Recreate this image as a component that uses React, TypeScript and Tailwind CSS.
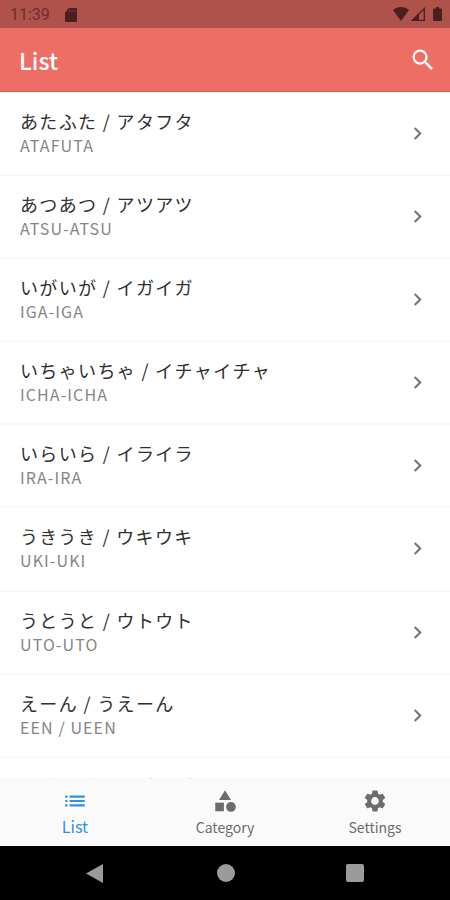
import { MdCategory, MdChevronRight, MdList, MdSearch, MdSettings } from "react-icons/md";
import type { IconType } from "react-icons";

type Word = {
  kana: string;
  romaji: string;
};

const words: Word[] = [
  { kana: "あたふた / アタフタ", romaji: "ATAFUTA" },
  { kana: "あつあつ / アツアツ", romaji: "ATSU-ATSU" },
  { kana: "いがいが / イガイガ", romaji: "IGA-IGA" },
  { kana: "いちゃいちゃ / イチャイチャ", romaji: "ICHA-ICHA" },
  { kana: "いらいら / イライラ", romaji: "IRA-IRA" },
  { kana: "うきうき / ウキウキ", romaji: "UKI-UKI" },
  { kana: "うとうと / ウトウト", romaji: "UTO-UTO" },
  { kana: "えーん / うえーん", romaji: "EEN / UEEN" },
  { kana: "おずおず / オズオズ", romaji: "OZU-OZU" },
];

const tabs: { label: string; icon: IconType; active?: boolean }[] = [
  { label: "List", icon: MdList, active: true },
  { label: "Category", icon: MdCategory },
  { label: "Settings", icon: MdSettings },
];

function StatusBar() {
  return (
    <div className="flex h-7 shrink-0 items-center justify-between bg-[#b0524c] pl-[10px] pr-2 text-[#4a1f1d]">
      <div className="flex items-center gap-[15px]">
        <span className="pt-[2px] font-[Roboto,sans-serif] text-[16px] leading-[26px] text-[#6b2f2c]">11:39</span>
        <svg className="mt-px h-[14px] w-3" viewBox="0 0 12 14" fill="currentColor">
          <path d="M4 0h7a1 1 0 0 1 1 1v12a1 1 0 0 1-1 1H1a1 1 0 0 1-1-1V4.500z" />
          <path d="M4.500 2v2M7 2v2M9.500 2v2" stroke="#8a403c" />
        </svg>
      </div>
      <div className="flex items-center">
        <svg className="h-[14px] w-4" viewBox="0 0 16 14" fill="currentColor">
          <path d="M0 3C4.500-1 11.500-1 16 3L8 14z" />
        </svg>
        <svg className="ml-[2px] h-[14px] w-[14px]" viewBox="0 0 14 14">
          <path d="M13.300 1.500v11.800H1.500z" fill="none" stroke="currentColor" strokeWidth="1.300" />
          <path d="M0 14L8 6v8z" fill="currentColor" />
        </svg>
        <svg className="ml-2 h-[14px] w-[9px]" viewBox="0 0 9 14" fill="currentColor">
          <path d="M3 0h3v1.500h2a1 1 0 0 1 1 1V13a1 1 0 0 1-1 1H1a1 1 0 0 1-1-1V2.500a1 1 0 0 1 1-1h2z" />
        </svg>
      </div>
    </div>
  );
}

function WordRow({ kana, romaji }: Word) {
  return (
    <li className="flex h-[83.15px] shrink-0 items-center justify-between border-b-2 border-[#f7f8f8] px-5">
      <div className="pb-[1px]">
        <p className="text-[18px] leading-6 tracking-[1.35px] text-[#303030]">{kana}</p>
        <p className="text-[16px] leading-6 tracking-[1.1px] text-[#858585]">{romaji}</p>
      </div>
      <MdChevronRight className="size-[25px] text-[#757575]" />
    </li>
  );
}

export default function App() {
  return (
    <div className="flex h-[900px] w-[450px] flex-col overflow-hidden bg-white font-['Noto_Sans_CJK_JP',sans-serif]">
      <StatusBar />
      <header className="flex h-16 shrink-0 items-center justify-between border-b border-[#e35f56] bg-[#ec6e64] pl-[19px] pr-[13px] text-white">
        <h1 className="text-[23px] font-medium leading-8">List</h1>
        <MdSearch className="size-[28px]" />
      </header>
      <ul className="flex min-h-0 flex-1 flex-col overflow-hidden pt-[0.7px]">
        {words.map((word) => (
          <WordRow key={word.romaji} {...word} />
        ))}
      </ul>
      <nav className="relative grid h-[67px] shrink-0 grid-cols-3 bg-[#fafafa] shadow-[0_-2px_0_rgba(248,248,248,0.6)]">
        {tabs.map(({ label, icon: Icon, active }) => (
          <div
            key={label}
            className={`flex flex-col items-center pt-[9px] ${active ? "text-[#2e91e5]" : "text-[#6c6c6c]"}`}
          >
            <Icon className="size-[26px] shrink-0" />
            <span className={active ? "text-[16px] leading-6" : "pt-px text-[14px] leading-6"}>{label}</span>
          </div>
        ))}
      </nav>
      <div className="flex h-[54px] shrink-0 items-center justify-between bg-black px-[86px] text-[#9b9b9b]">
        <svg className="h-[19px] w-[17px]" viewBox="0 0 17 19" fill="currentColor">
          <path d="M17 0v19L0 9.500z" />
        </svg>
        <div className="ml-[2px] size-[18px] rounded-full bg-[#9b9b9b]" />
        <div className="size-[18px] rounded-[2px] bg-[#9b9b9b]" />
      </div>
    </div>
  );
}
